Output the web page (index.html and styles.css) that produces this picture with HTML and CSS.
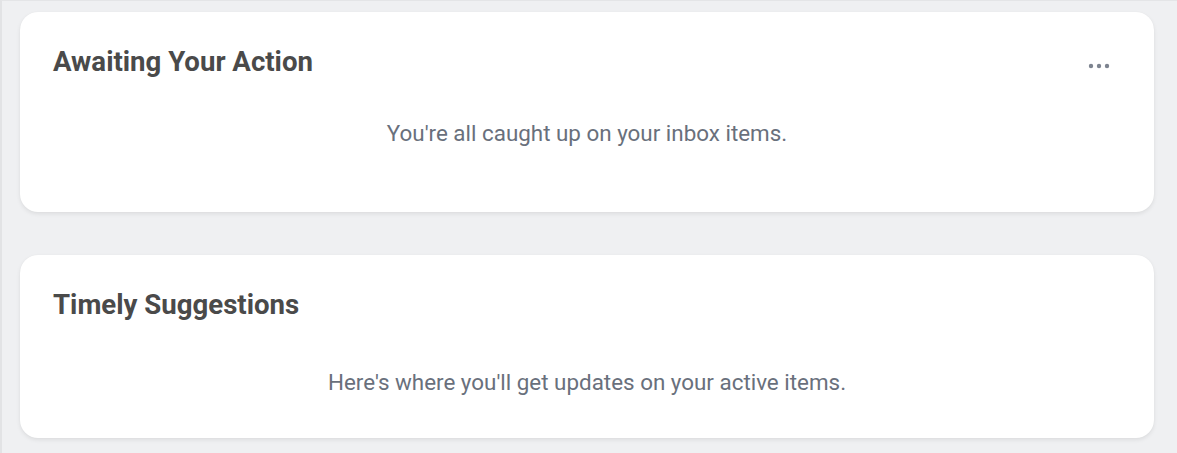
FILE: index.html
```html
<!DOCTYPE html>
<html>
<head>
<meta charset="utf-8">
<link rel="stylesheet" href="styles.css">
</head>
<body>
<div class="page">
  <section class="card card-action">
    <div class="card-head">
      <h2 class="card-title">Awaiting Your Action</h2>
      <button class="more" aria-label="More">
        <svg width="22" height="6" viewBox="0 0 22 6"><circle cx="3" cy="3" r="2.2" fill="#7d8490"/><circle cx="11" cy="3" r="2.2" fill="#7d8490"/><circle cx="19" cy="3" r="2.2" fill="#7d8490"/></svg>
      </button>
    </div>
    <p class="empty">You're all caught up on your inbox items.</p>
  </section>
  <section class="card card-suggest">
    <div class="card-head">
      <h2 class="card-title">Timely Suggestions</h2>
    </div>
    <p class="empty">Here's where you'll get updates on your active items.</p>
  </section>
</div>
</body>
</html>
```
FILE: styles.css
```css
html, body {
  margin: 0;
  padding: 0;
}
body {
  background: #eff0f2;
  font-family: Roboto, "Liberation Sans", Arial, sans-serif;
  width: 1177px;
  height: 453px;
  overflow: hidden;
}
.page {
  box-sizing: border-box;
  height: 453px;
  border-left: 2px solid #e2e3e5;
  border-top: 1px solid #e4e5e7;
  padding: 11px 23px 0 18px;
  display: flex;
  flex-direction: column;
  gap: 43px;
}
.card {
  background: #fff;
  border-radius: 18px;
  box-shadow: 0 2px 4px rgba(0, 0, 0, 0.08), 0 0 1px rgba(0, 0, 0, 0.06);
  padding: 34px 33px 0 33px;
  box-sizing: border-box;
}
.card-action { height: 200px; }
.card-suggest { height: 183px; }
.card-head {
  display: flex;
  align-items: center;
  justify-content: space-between;
  height: 32px;
}
.card-title {
  margin: 0;
  font-size: 27.6px;
  font-weight: 700;
  color: #4a4a4a;
  line-height: 32px;
}
.more {
  border: 0;
  background: none;
  padding: 0;
  margin-right: 11px;
  margin-top: 8px;
  display: flex;
}
.empty {
  margin: 0;
  text-align: center;
  font-size: 22.4px;
  line-height: 24px;
  color: #69707c;
}
.card-action .empty { margin-top: 43px; }
.card-suggest .empty { margin-top: 49px; }
```
